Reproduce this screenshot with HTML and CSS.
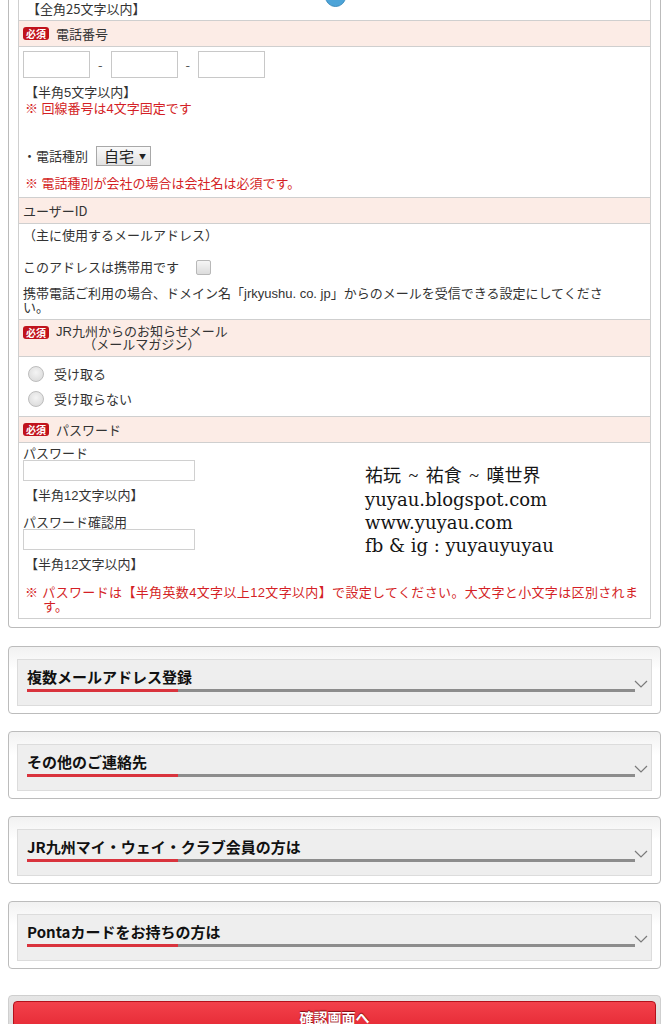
FILE: index.html
```html
<!DOCTYPE html>
<html>
<head>
    <meta charset="utf-8" />
    <title>会員登録</title>
    <link rel="stylesheet" href="styles.css">
</head>
<body>
    <div class="form-panel">
        <span class="scroll-dot"></span>

        <div class="form-table">
            <div class="cell cell-top">【全角25文字以内】</div>

            <div class="row-head"><span class="req">必須</span>電話番号</div>
            <div class="cell cell-tel">
                <div class="tel-inputs">
                    <input type="text" class="tel" /><span>-</span>
                    <input type="text" class="tel" /><span>-</span>
                    <input type="text" class="tel" />
                </div>
                <p class="hint">【半角5文字以内】</p>
                <p class="note">※ 回線番号は4文字固定です</p>
                <div class="tel-type">・電話種別 <span class="select">自宅<i>▼</i></span></div>
                <p class="note note-company">※ 電話種別が会社の場合は会社名は必須です。</p>
            </div>

            <div class="row-head">ユーザーID</div>
            <div class="cell cell-user">
                <p class="plain">（主に使用するメールアドレス）</p>
                <label class="mobile-check">このアドレスは携帯用です <span class="checkbox"></span></label>
                <p class="mobile-note tight">携帯電話ご利用の場合、ドメイン名「jrkyushu. co. jp」からのメールを受信できる設定にしてくださ<br>い。</p>
            </div>

            <div class="row-head row-head-tall">
                <span class="req">必須</span>
                <span class="head-label tight">JR九州からのお知らせメール<br>（メールマガジン）</span>
            </div>
            <div class="cell cell-radio">
                <label class="radio-row"><span class="radio"></span>受け取る</label>
                <label class="radio-row"><span class="radio"></span>受け取らない</label>
            </div>

            <div class="row-head"><span class="req">必須</span>パスワード</div>
            <div class="cell cell-pass">
                <p class="field-label">パスワード</p>
                <input type="password" class="pass" />
                <p class="hint">【半角12文字以内】</p>
                <p class="field-label second">パスワード確認用</p>
                <input type="password" class="pass" />
                <p class="hint">【半角12文字以内】</p>
                <p class="note note-pass tight">※ パスワードは【半角英数4文字以上12文字以内】で設定してください。大文字と小文字は区別されま<br>す。</p>
            </div>
        </div>

        <div class="watermark">
            <span class="wm-cjk">祐玩 ~ 祐食 ~ 嘆世界</span><br>
            yuyau.blogspot.com<br>
            www.yuyau.com<br>
            fb &amp; ig : yuyauyuyau
        </div>
    </div>

    <div class="acc first">
        <div class="acc-inner">
            <h2>複数メールアドレス登録</h2>
            <div class="acc-bar"></div>
            <svg class="chev" width="14" height="8" viewBox="0 0 14 8"><path d="M1 1l6 6 6-6" fill="none" stroke="#7a7a7a" stroke-width="1.2"/></svg>
        </div>
    </div>

    <div class="acc">
        <div class="acc-inner">
            <h2>その他のご連絡先</h2>
            <div class="acc-bar"></div>
            <svg class="chev" width="14" height="8" viewBox="0 0 14 8"><path d="M1 1l6 6 6-6" fill="none" stroke="#7a7a7a" stroke-width="1.2"/></svg>
        </div>
    </div>

    <div class="acc">
        <div class="acc-inner">
            <h2>JR九州マイ・ウェイ・クラブ会員の方は</h2>
            <div class="acc-bar"></div>
            <svg class="chev" width="14" height="8" viewBox="0 0 14 8"><path d="M1 1l6 6 6-6" fill="none" stroke="#7a7a7a" stroke-width="1.2"/></svg>
        </div>
    </div>

    <div class="acc">
        <div class="acc-inner">
            <h2>Pontaカードをお持ちの方は</h2>
            <div class="acc-bar"></div>
            <svg class="chev" width="14" height="8" viewBox="0 0 14 8"><path d="M1 1l6 6 6-6" fill="none" stroke="#7a7a7a" stroke-width="1.2"/></svg>
        </div>
    </div>

    <div class="submit-wrap">
        <button type="button" class="submit">確認画面へ</button>
    </div>
</body>
</html>
```

FILE: styles.css
```css
* { margin: 0; padding: 0; box-sizing: border-box; }

body {
    background: #ffffff;
    font-family: "Noto Sans CJK JP", "Noto Sans", sans-serif;
    font-size: 13px;
    line-height: 16px;
    color: #333;
}

/* stacked lines: primary font with a short box so lines can sit close */
.tight,
.hint,
.note {
    font-family: "Liberation Sans", "Noto Sans CJK JP", sans-serif;
}

.tight { line-height: 14px; }

/* form panel */
.form-panel {
    position: relative;
    margin: 0 8px;
    padding: 0 9px 8px;
    border: 1px solid #bbb;
    border-top: none;
    border-radius: 0 0 4px 4px;
}

.scroll-dot {
    position: absolute;
    left: 316px;
    top: -14px;
    width: 21px;
    height: 21px;
    border-radius: 50%;
    background: #4da4d8;
    border: 1px solid #3f8dbd;
}

.form-table {
    border: 1px solid #cfcfcf;
    border-top: none;
}

.cell { padding: 0 4px; }

.cell-top { padding: 1px 4px 3px 8px; }

.row-head {
    display: flex;
    align-items: center;
    height: 27px;
    padding: 0 4px;
    background: #fcece6;
    border-top: 1px solid #cfcfcf;
    border-bottom: 1px solid #cfcfcf;
    color: #333;
}

.row-head-tall {
    height: 38px;
    align-items: flex-start;
    padding-top: 5px;
}

.head-label {
    display: inline-block;
    text-align: center;
    line-height: 13px;
}

.req {
    display: inline-block;
    flex: none;
    width: 26px;
    height: 13px;
    margin-right: 7px;
    border-radius: 3px;
    background: #c0121c;
    color: #fff;
    font-size: 10px;
    line-height: 13px;
    font-weight: bold;
    text-align: center;
}

.row-head-tall .req { margin-top: 1px; }

.hint { padding-left: 2px; }

.note {
    color: #d41f26;
    padding-left: 2px;
}

/* telephone */
.cell-tel { padding-top: 4px; padding-bottom: 5px; }

.tel-inputs {
    display: flex;
    align-items: center;
    gap: 8px;
    height: 27px;
    color: #555;
}

input.tel {
    width: 67px;
    height: 27px;
    border: 1px solid #c8c8c8;
    background: #fff;
}

.cell-tel .hint { margin-top: 7px; }

.tel-type {
    display: flex;
    align-items: center;
    height: 20px;
    margin-top: 29px;
}

.select {
    display: inline-flex;
    align-items: center;
    height: 20px;
    margin-left: 8px;
    padding: 0 4px 0 7px;
    border: 1px solid #a8a8a8;
    background: linear-gradient(#fafafa, #e2e2e2);
    font-size: 15px;
    color: #222;
}

.select i {
    font-style: normal;
    font-size: 7px;
    margin-left: 5px;
}

.note-company { margin-top: 10px; }

/* user id */
.cell-user { padding-top: 3px; padding-bottom: 4px; }

.mobile-check {
    display: flex;
    align-items: center;
    margin-top: 16px;
    height: 16px;
}

.checkbox {
    display: inline-block;
    width: 15px;
    height: 15px;
    margin-left: 17px;
    border: 1px solid #b8b8b8;
    border-radius: 2px;
    background: linear-gradient(#f6f6f6, #dcdcdc);
}

.mobile-note { margin-top: 12px; }

/* mail magazine */
.cell-radio { padding: 4px 4px 5px; }

.radio-row {
    display: flex;
    align-items: center;
    height: 25px;
}

.radio {
    display: inline-block;
    width: 16px;
    height: 16px;
    margin: 0 10px 0 5px;
    border-radius: 50%;
    border: 1px solid #bdbdbd;
    background: radial-gradient(circle at 50% 40%, #f4f4f4, #d6d6d6);
}

/* password */
.cell-pass { padding-top: 3px; padding-bottom: 4px; }

.field-label { line-height: 14px; }

.field-label.second { margin-top: 11px; }

input.pass {
    display: block;
    width: 172px;
    height: 21px;
    border: 1px solid #d0d0d0;
    background: #fff;
}

.cell-pass .hint { margin-top: 7px; }

.note-pass {
    margin-top: 13px;
    padding-left: 20px;
    text-indent: -18px;
    letter-spacing: 0.35px;
}

.watermark {
    position: absolute;
    left: 356px;
    top: 464px;
    font-family: "DejaVu Serif", "Noto Sans CJK TC", serif;
    font-size: 18px;
    line-height: 23px;
    color: #151515;
}

.wm-cjk {
    font-family: "Liberation Serif", "Noto Sans CJK TC", serif;
    font-size: 18px;
    word-spacing: 3px;
}

/* accordions */
.acc {
    margin: 17px 8px 0;
    padding: 12px 8px 7px;
    border: 1px solid #bcbcbc;
    border-radius: 4px;
    background: linear-gradient(#f1f1f1, #ffffff 35%);
}

.acc.first { margin-top: 18px; }

.acc-inner {
    position: relative;
    padding: 7px 16px 13px 9px;
    border: 1px solid #dcdcdc;
    background: #eeeeee;
}

.acc-inner h2 {
    font-size: 15px;
    line-height: 20px;
    font-weight: bold;
    color: #111;
}

.acc-bar {
    position: relative;
    height: 3px;
    margin-top: 2px;
    background: #8c8c8c;
}

.acc-bar::before {
    content: "";
    position: absolute;
    left: 0;
    top: 0;
    width: 151px;
    height: 3px;
    background: #d9333d;
}

.chev {
    position: absolute;
    right: 3px;
    top: 20px;
}

/* submit */
.submit-wrap {
    margin: 26px 8px 0;
    padding: 5px 4px;
    border: 1px solid #cfcfcf;
    border-radius: 4px;
    background: linear-gradient(#e6e6e6, #d4d4d4);
}

.submit {
    display: block;
    width: 100%;
    height: 44px;
    border: 1px solid #b3111b;
    border-radius: 4px;
    background: linear-gradient(#f3414b, #dd1c28);
    color: #fff;
    font-family: "Noto Sans CJK JP", sans-serif;
    font-size: 14px;
    font-weight: bold;
    text-shadow: 0 -1px 1px #7a0a10;
    padding-bottom: 12px;
}
```
